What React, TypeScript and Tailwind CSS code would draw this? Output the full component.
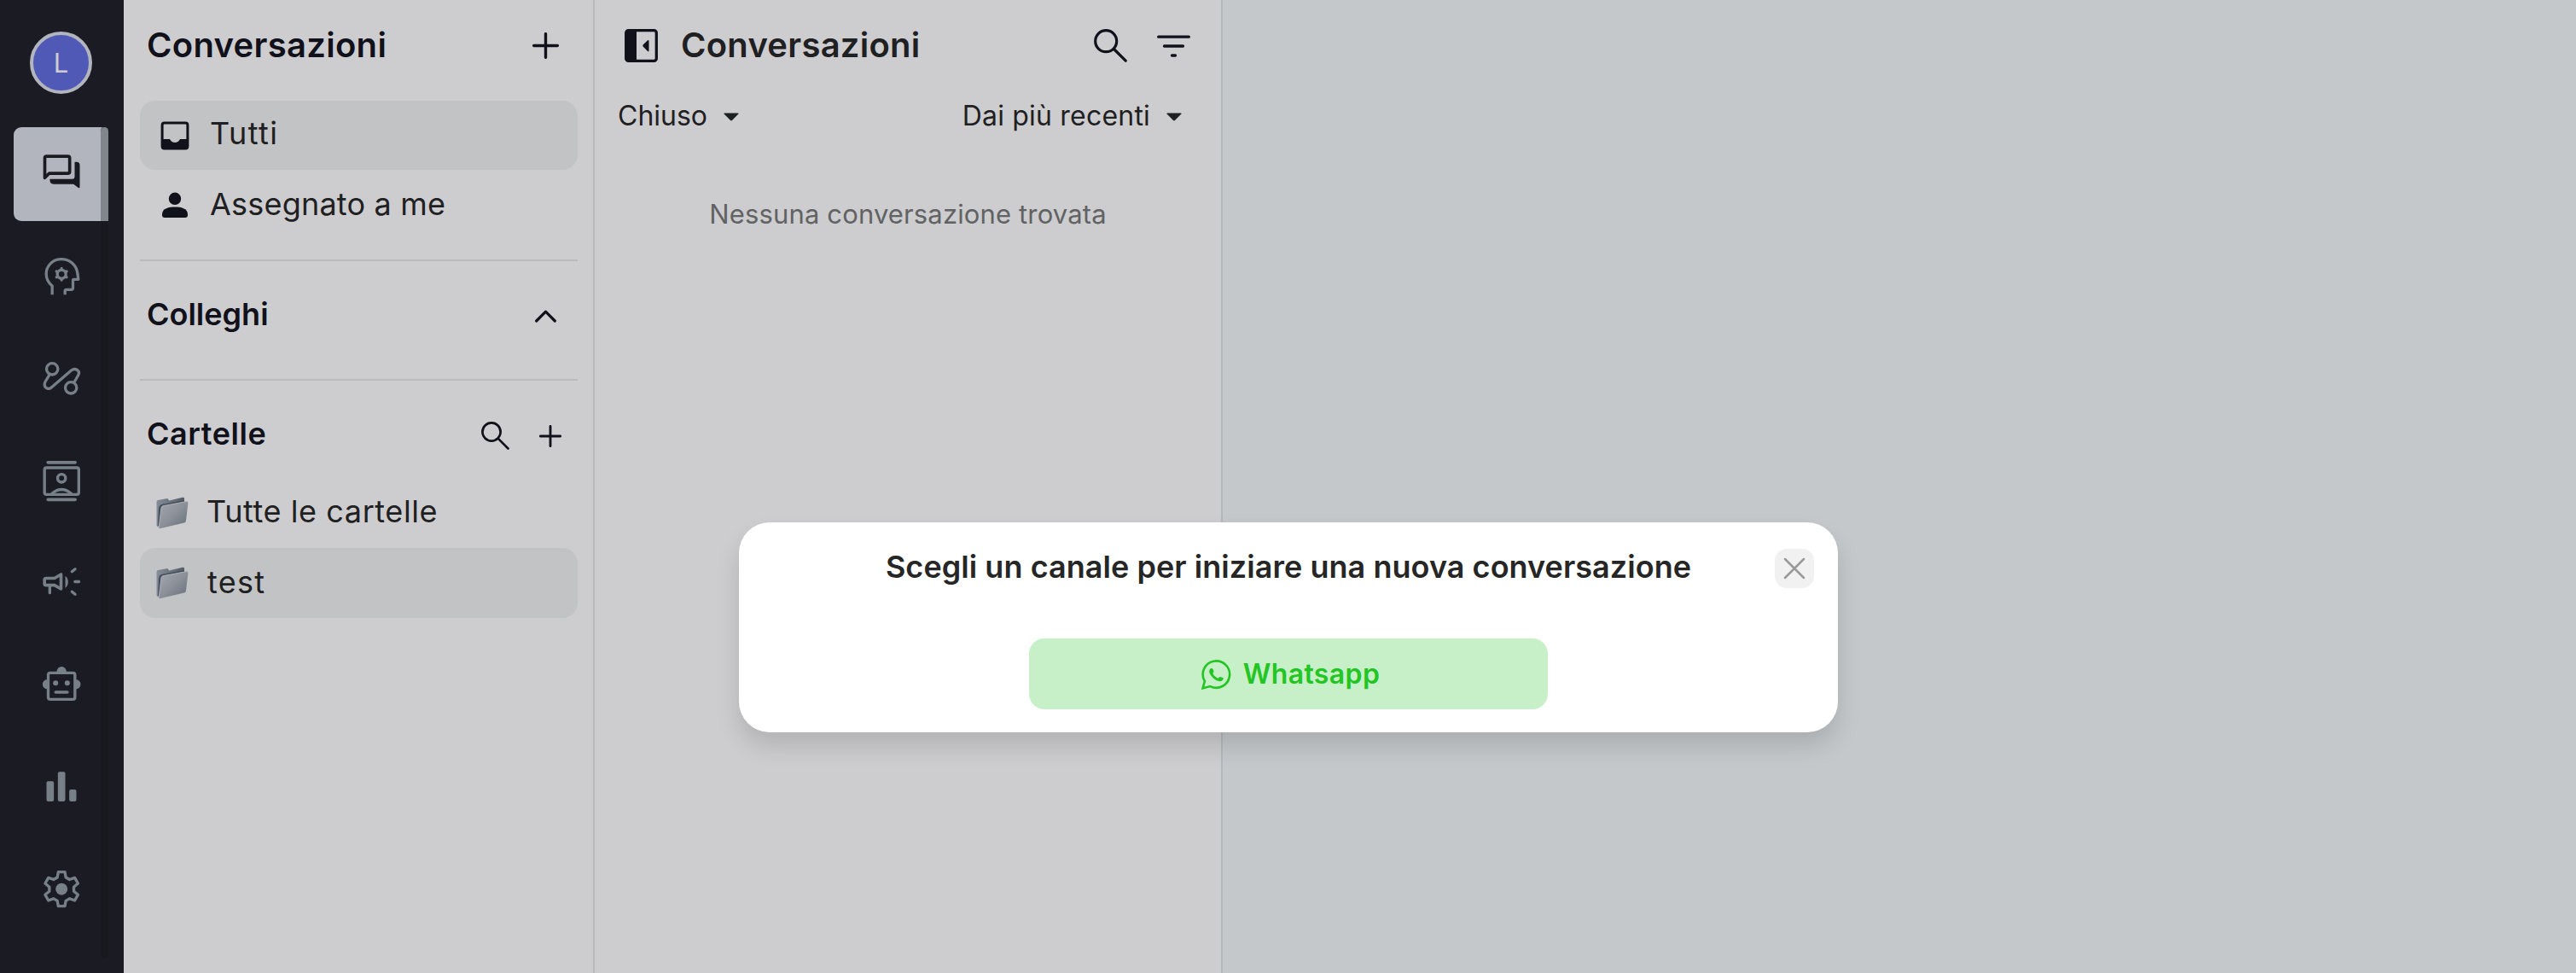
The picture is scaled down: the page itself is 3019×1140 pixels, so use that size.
import type { ReactNode } from "react";

function NavIcon({ origin, children }: { origin: number; children: ReactNode }) {
  return (
    <svg
      viewBox={`139.5 ${origin} 150 150`}
      className="size-[50px]"
      fill="none"
      stroke="currentColor"
      strokeWidth="10"
      strokeLinecap="round"
      strokeLinejoin="round"
    >
      {children}
    </svg>
  );
}

function NavItem({ active, children }: { active?: boolean; children: ReactNode }) {
  return (
    <button
      className={
        active
          ? "flex h-[110px] w-[111px] items-center justify-center overflow-hidden rounded-[9px] bg-[#b2b5bd] text-[#191b20]"
          : "flex h-[110px] w-[111px] items-center justify-center text-[#778087]"
      }
    >
      {children}
    </button>
  );
}

const sectorAngles = [0, 60, 120, 180, 240, 300];

function gearPath(cx: number, cy: number, points: number[][]) {
  const all = sectorAngles.flatMap((deg) => {
    const a = (deg * Math.PI) / 180;
    return points.map(([x, y]) => [
      cx + x * Math.cos(a) - y * Math.sin(a),
      cy + x * Math.sin(a) + y * Math.cos(a),
    ]);
  });
  return "M" + all.map((p) => p.map((v) => v.toFixed(1)).join(" ")).join("L") + "Z";
}

function NavBar() {
  return (
    <nav className="relative flex w-[145px] shrink-0 flex-col bg-[#1a1b23] pl-4">
      <div className="mt-[37px] ml-[19px] flex size-[73px] items-center justify-center rounded-full border-4 border-[#b2b5bd] bg-[#5159b7] text-[31px] leading-none text-[#cdcdd3]">
        L
      </div>
      <div className="mt-[39px] flex flex-col gap-[10px]">
        <NavItem active>
          <NavIcon origin={537}>
            <path
              d="M156 625V556Q156 549.500 162 549.500H237Q243.500 549.500 243.500 556V603Q243.500 609.500 237 609.500H171Z"
              strokeWidth="11"
            />
            <path
              d="M261 569H268Q279 570 279 580V657Q279 663 274 660L257 647H187Q174 645 174 635V629H254Q261 629 261 622Z"
              fill="currentColor"
              stroke="none"
            />
          </NavIcon>
        </NavItem>
        <NavItem>
          <NavIcon origin={897}>
            <path
              d="M182 1036V1005Q161 987 161 963C161 933 185 911 214 911C244 911 267 931 271 960L274 982H258Q255 982 255 985V1012Q255 1018 249 1018H232Q227 1018 227 1023V1036"
              strokeLinecap="butt"
            />
            <circle cx="215" cy="964" r="15" />
            {sectorAngles.map((deg) => (
              <path key={deg} d="M215 946V943" strokeWidth="9" transform={`rotate(${deg} 215 964)`} />
            ))}
          </NavIcon>
        </NavItem>
        <NavItem>
          <NavIcon origin={117}>
            <circle cx="182" cy="157" r="20" />
            <circle cx="248" cy="223" r="20" />
            <path d="M172 178L158 201C148 220 167 233 180 221L249 162C264 151 283 164 273 180L259 204" />
          </NavIcon>
        </NavItem>
        <NavItem>
          <NavIcon origin={477}>
            <path d="M167 485.500H263M167 616H263" strokeWidth="11" />
            <rect x="155" y="504" width="120.500" height="94" rx="7" />
            <circle cx="215" cy="541" r="14" />
            <path d="M181 595Q215 566 249 595" />
          </NavIcon>
        </NavItem>
        <NavItem>
          <NavIcon origin={837}>
            <path
              d="M161 892.500H190L213 879V930L190 917H161Q155 917 155 911V898Q155 892.500 161 892.500Z"
              strokeWidth="11"
            />
            <path d="M173.500 922V944M251.500 869L262.500 860M262 904.500H276M251.500 940L262.500 949" />
            <path d="M228 884Q238 892 238 905T228 927Z" fill="currentColor" stroke="none" />
          </NavIcon>
        </NavItem>
        <NavItem>
          <NavIcon origin={57}>
            <rect x="168" y="85" width="94" height="93" rx="7" />
            <path
              d="M198 82A17 19 0 0 1 232 82ZM165 108A17 17 0 0 0 165 142ZM265 108A17 17 0 0 1 265 142Z"
              fill="currentColor"
              stroke="none"
            />
            <circle cx="194" cy="121" r="9" fill="currentColor" stroke="none" />
            <circle cx="235" cy="121" r="9" fill="currentColor" stroke="none" />
            <path d="M194.500 153H235" strokeWidth="11" />
          </NavIcon>
        </NavItem>
        <NavItem>
          <NavIcon origin={417}>
            <g fill="currentColor" stroke="none">
              <rect x="162" y="466" width="26" height="71" rx="6" />
              <rect x="202" y="433" width="26" height="104" rx="6" />
              <rect x="242" y="495" width="25" height="42" rx="6" />
            </g>
          </NavIcon>
        </NavItem>
        <NavItem>
          <NavIcon origin={777}>
            <path
              d={gearPath(215, 845, [
                [-11.5, -60],
                [11.5, -60],
                [15, -41],
                [28, -33.5],
              ])}
            />
            <circle cx="215" cy="845" r="21" fill="currentColor" stroke="none" />
          </NavIcon>
        </NavItem>
      </div>
      <div className="absolute top-[149px] left-[118px] flex h-[973px] w-[9px] flex-col overflow-hidden rounded-[9px] bg-[#18181f]">
        <div className="h-[110px] bg-[#80868c]" />
      </div>
    </nav>
  );
}

function FolderIcon() {
  return (
    <svg viewBox="0 0 38 38" className="size-[38px]">
      <defs>
        <linearGradient id="folderFront" x1="0" y1="0" x2="1" y2="1">
          <stop offset="0" stopColor="#a3a8b1" />
          <stop offset="0.5" stopColor="#8b9099" />
          <stop offset="1" stopColor="#666e78" />
        </linearGradient>
        <linearGradient id="folderBack" x1="0" y1="0" x2="1" y2="0">
          <stop offset="0" stopColor="#858e98" />
          <stop offset="1" stopColor="#525b66" />
        </linearGradient>
      </defs>
      <path d="M0.500 6Q0.500 4.500 2 4L13 2Q14.500 2 15 4.500L31 0.800Q33 0.500 33 2V7L5 36L1.500 35Q0.500 34.500 0.500 33Z" fill="url(#folderBack)" />
      <path d="M3 13Q3.500 10 6 9L33 4V20L4 34H2Z" fill="#464e59" />
      <path d="M6 13Q6.200 11.200 8 10.700L35.500 5.500Q37.600 5.200 37.400 7.500L35 28Q34.700 30 33 30.500L4.500 37.300Q3 37.500 3.200 35.500Z" fill="url(#folderFront)" />
      <path d="M3.200 36L6 13Q6.200 11.200 8 10.700L36 5.500" fill="none" stroke="#b0b5bd" strokeWidth="0.900" />
    </svg>
  );
}

function PlusIcon({ className, width }: { className: string; width: number }) {
  return (
    <svg viewBox="0 0 30 30" className={className} stroke="currentColor" strokeWidth={width} strokeLinecap="round">
      <path d="M15 1.600V28.400M1.600 15H28.400" />
    </svg>
  );
}

function SearchIcon({ className }: { className: string }) {
  return (
    <svg viewBox="0 0 39 39" className={className} fill="none" stroke="currentColor" strokeWidth="3.200" strokeLinecap="round">
      <circle cx="14.200" cy="14.200" r="12.500" />
      <path d="M23.500 23.500L37.200 37.200" />
    </svg>
  );
}

function Caret() {
  return (
    <svg viewBox="0 0 18 10" className="h-[10px] w-[18px]" fill="currentColor">
      <path d="M1 0.500H17Q18 0.800 17.400 1.600L10 9Q9 9.800 8 9L0.600 1.600Q0 0.800 1 0.500Z" />
    </svg>
  );
}

function Sidebar() {
  return (
    <aside className="flex w-[552px] shrink-0 flex-col border-r-2 border-[#b9babc] bg-[#cdcdcf] pr-[18px] pl-[19px] text-[36px] leading-none text-[#1f2022]">
      <header className="mb-[11px] flex h-[107px] items-center justify-between pr-[22px] pl-2 text-[#11111b]">
        <h1 className="pb-[2px] text-[40px] font-semibold tracking-[0.3px]">Conversazioni</h1>
        <PlusIcon className="size-[31px]" width={3.3} />
      </header>

      <div className="flex h-[81px] items-center rounded-[18px] bg-[#c2c3c5] pl-6">
        <svg viewBox="0 0 34 34" className="size-[34px] text-[#11111b]">
          <rect x="2.100" y="1.900" width="29.800" height="30.200" rx="2.500" fill="none" stroke="currentColor" strokeWidth="3" />
          <path d="M2 21H11Q13 25 17 25T23 21H32V30Q32 32.500 30 32.500H4Q2 32.500 2 30Z" fill="currentColor" />
        </svg>
        <span className="ml-6 pb-[5px] tracking-[1.4px]">Tutti</span>
      </div>
      <div className="mt-px flex h-[81px] items-center pl-6">
        <svg viewBox="0 0 34 34" className="size-[34px] text-[#11111b]" fill="currentColor">
          <circle cx="17" cy="8.800" r="7.200" />
          <path d="M2 27C2 20 10 18.500 17 18.500S32 20 32 27V28Q32 31 29 31H5Q2 31 2 28Z" />
        </svg>
        <span className="ml-6 pb-1 tracking-[0.2px]">Assegnato a me</span>
      </div>

      <section className="mt-[23px] flex h-[142px] items-center justify-between border-y-2 border-[#b9babc] pr-[25px] pb-[9px] pl-2 text-[#11111b]">
        <h2 className="pb-[5px] font-semibold">Colleghi</h2>
        <svg viewBox="0 0 25 15" className="h-[15px] w-[25px]" fill="none" stroke="currentColor" strokeWidth="3.200" strokeLinecap="round" strokeLinejoin="round">
          <path d="M1.700 13L12.500 2.200L23.300 13" />
        </svg>
      </section>

      <section className="flex h-[114px] items-center pt-[15px] pr-[19px] pl-2 text-[#11111b]">
        <h2 className="pb-[5px] font-semibold tracking-[0.55px]">Cartelle</h2>
        <SearchIcon className="ml-auto size-[33px]" />
        <PlusIcon className="ml-[35px] size-[26px]" width={3.3} />
      </section>
      <div className="flex h-[81px] items-center pl-[19px]">
        <FolderIcon />
        <span className="ml-[21px] pb-[3px] tracking-[0.58px]">Tutte le cartelle</span>
      </div>
      <div className="mt-px flex h-[82px] items-center rounded-[18px] bg-[#c2c3c5] pl-[19px]">
        <FolderIcon />
        <span className="ml-[22px] pb-[3px] tracking-[1.27px]">test</span>
      </div>
    </aside>
  );
}

function ConversationList() {
  return (
    <section className="flex w-[736px] shrink-0 flex-col border-r-2 border-[#b5b8ba] bg-[#cdcdcf] text-[32px] leading-none text-[#1f2022]">
      <header className="flex h-[107px] items-center pr-9 pl-[35px]">
        <svg viewBox="0 0 39 39" className="size-[39px] text-[#11111b]">
          <rect x="1.700" y="1.700" width="35.600" height="35.600" rx="2.800" fill="none" stroke="currentColor" strokeWidth="3.300" />
          <path d="M2 3H14V36H2ZM28.500 14V25.500Q28.300 27 27 26L21.600 20.500Q21 19.500 21.600 18.500L27 13.200Q28.300 12.500 28.500 14Z" fill="currentColor" />
        </svg>
        <h2 className="ml-[27px] pb-[2px] text-[40px] font-semibold tracking-[0.25px]">Conversazioni</h2>
        <SearchIcon className="ml-auto size-[39px] text-[#11111b]" />
        <svg viewBox="0 0 39 26" className="ml-[35px] h-[26px] w-[39px] text-[#11111b]" stroke="currentColor" strokeWidth="3.300" strokeLinecap="round">
          <path d="M1.700 2.200H37.300M8.500 13H30.500M17.500 24H21.500" />
        </svg>
      </header>
      <div className="flex h-[59px] items-center justify-between pr-[46px] pl-[27px]">
        <div className="flex items-center gap-[19px]">
          <span className="pb-px">Chiuso</span>
          <Caret />
        </div>
        <div className="flex items-center gap-[19px]">
          <span className="pb-px tracking-[0.2px]">Dai più recenti</span>
          <Caret />
        </div>
      </div>
      <p className="mt-[69px] text-center text-[31px] leading-none tracking-[0.14px] text-[#616263]">
        Nessuna conversazione trovata
      </p>
    </section>
  );
}

function ChannelDialog() {
  return (
    <div className="absolute inset-0 flex items-start justify-center pt-[612px] pl-px">
      <div
        role="dialog"
        className="flex h-[246px] w-[1288px] flex-col items-center rounded-[36px] bg-white leading-none shadow-[0_16px_28px_rgba(0,0,0,0.13)]"
      >
        <div className="relative flex h-[108px] w-full items-center justify-center">
          <h3 className="pb-1 text-[36px] font-semibold tracking-[0.05px] text-[#262626]">
            Scegli un canale per iniziare una nuova conversazione
          </h3>
          <button className="absolute right-7 flex size-[46px] items-center justify-center rounded-[14px] bg-[#f1f1f1] text-[#999999]">
            <svg viewBox="0 0 26 26" className="size-[26px]" stroke="currentColor" strokeWidth="2.500" strokeLinecap="round">
              <path d="M2 2L24 24M24 2L2 24" />
            </svg>
          </button>
        </div>
        <button className="mt-[28px] flex h-[83px] w-[608px] items-center justify-center gap-[14px] rounded-[18px] bg-[#c8f0c8] pl-[5px] text-[#22c522]">
          <svg viewBox="0 0 35 35" className="mt-[2px] size-[35px]">
            <path
              d="M1.600 33.400L3.900 25.100A15.700 15.700 0 1 1 10.300 31.100Z"
              fill="none"
              stroke="currentColor"
              strokeWidth="2.600"
              strokeLinejoin="miter"
            />
            <path
              d="M12.300 10Q10.600 9.800 9.800 11.200Q8.300 13.700 10 16.400Q13.300 22.300 18.500 24.500Q22.300 26.200 24.800 24Q26.200 22.500 25.800 21.600Q25 20.500 21.800 20Q20.800 20 20.200 21.200Q19.500 22 18.500 21.300Q15.300 19.700 13.500 16.400Q13.200 15.600 14 15Q15 14 14.200 12.500Q13.500 10.200 12.300 10Z"
              fill="currentColor"
            />
          </svg>
          <span className="text-[32px] font-semibold tracking-[0.4px]">Whatsapp</span>
        </button>
      </div>
    </div>
  );
}

export default function App() {
  return (
    <div className="relative flex h-screen w-full overflow-hidden bg-[#c4c8cb] font-['Inter',sans-serif]">
      <NavBar />
      <Sidebar />
      <ConversationList />
      <main className="flex-1" />
      <ChannelDialog />
    </div>
  );
}
